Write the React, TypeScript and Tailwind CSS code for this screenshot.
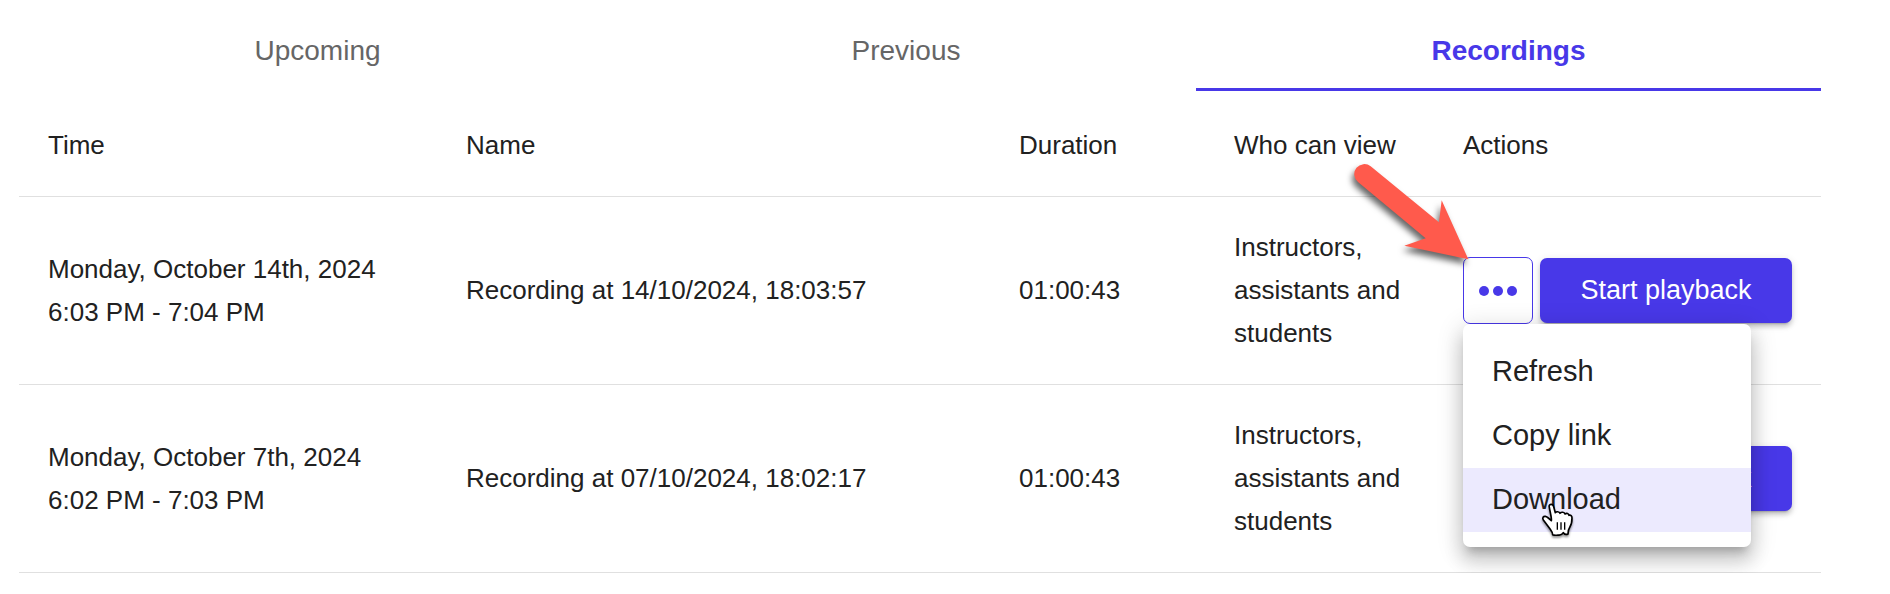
import React, { useState } from 'react';

interface Recording {
  id: number;
  date: string;
  hours: string;
  name: string;
  duration: string;
  viewers: string;
}

const TABS = ['Upcoming', 'Previous', 'Recordings'];

const MENU_ITEMS = ['Refresh', 'Copy link', 'Download'];

const RECORDINGS: Recording[] = [
  {
    id: 1,
    date: 'Monday, October 14th, 2024',
    hours: '6:03 PM - 7:04 PM',
    name: 'Recording at 14/10/2024, 18:03:57',
    duration: '01:00:43',
    viewers: 'Instructors, assistants and students',
  },
  {
    id: 2,
    date: 'Monday, October 7th, 2024',
    hours: '6:02 PM - 7:03 PM',
    name: 'Recording at 07/10/2024, 18:02:17',
    duration: '01:00:43',
    viewers: 'Instructors, assistants and students',
  },
];

const ArrowPointer = () => (
  <svg
    className="pointer-events-none absolute -left-[133px] -top-[117px] z-20 h-[140px] w-[150px] max-w-none drop-shadow-[-2px_5px_3px_rgba(0,0,0,0.6)]"
    viewBox="0 0 450 420"
    aria-hidden="true"
  >
    <path
      d="M122 79 L327 247 L335 181 L415 358 L223 317 L287 295 L84 126 A30 30 0 1 1 122 79 Z"
      fill="#ff5a4c"
    />
  </svg>
);

const HandCursor = () => (
  <svg
    className="pointer-events-none absolute left-[77px] top-[34px] z-20 h-[38px] w-[36px] max-w-none drop-shadow-[0_2px_1px_rgba(0,0,0,0.4)]"
    viewBox="60 66 108 114"
    aria-hidden="true"
  >
    <path
      d="M88 82 C86 76 90 73 94 73 C98 73 100 76 101 80 L106 98 C108 94 118 94 120 100 C124 95 133 96 135 102 C140 98 146 100 147 106 C152 104 156 108 156 114 C156 128 154 134 150 140 C146 146 144 152 144 162 C138 165 134 164 130 158 C126 165 120 166 114 165 C108 166 102 166 98 164 C98 156 92 150 88 144 C82 136 76 128 70 120 C66 114 70 108 76 109 C82 110 86 114 94 122 C96 116 90 96 88 82 Z"
      fill="#fff"
      stroke="#000"
      strokeWidth="5"
      strokeLinejoin="round"
    />
    <path d="M112 127 V149 M123 127 V149 M134 127 V149" stroke="#000" strokeWidth="4" />
  </svg>
);

const ActionsMenu = () => (
  <div
    role="menu"
    className="absolute left-0 top-full z-10 w-[288px] rounded-[7px] bg-white pt-4 pb-[15px] shadow-[0_9px_9px_-5px_rgba(0,0,0,0.2),0_14px_18px_2px_rgba(0,0,0,0.14),0_5px_25px_4px_rgba(0,0,0,0.12)]"
  >
    {MENU_ITEMS.map((item) => (
      <button
        key={item}
        type="button"
        role="menuitem"
        className={`relative block h-16 w-full px-[29px] pb-0.5 text-left text-[29px] leading-[43px] ${
          item === 'Download' ? 'bg-[#eceafe]' : 'hover:bg-[#eceafe]'
        }`}
      >
        {item}
        {item === 'Download' && <HandCursor />}
      </button>
    ))}
  </div>
);

const App: React.FC = () => {
  const [activeTab, setActiveTab] = useState('Recordings');
  const [openMenu, setOpenMenu] = useState<number | null>(1);

  return (
    <div className="bg-white pl-[19px] pr-[69px] font-['Liberation_Sans',Arial,sans-serif] text-[#212121]">
      <div role="tablist" className="flex">
        {TABS.map((tab) => (
          <button
            key={tab}
            type="button"
            role="tab"
            aria-selected={tab === activeTab}
            onClick={() => setActiveTab(tab)}
            className={`flex-auto border-b-[3px] pt-[30px] pb-4 text-[28px] leading-[42px] ${
              tab === activeTab
                ? 'border-[#4838e8] font-bold text-[#4838e8]'
                : 'border-transparent text-[#666]'
            }`}
          >
            {tab}
          </button>
        ))}
      </div>

      <table className="mt-1 w-full table-fixed border-separate border-spacing-0 text-left text-[26px] leading-[43px]">
        <thead>
          <tr className="*:border-b *:border-[#e0e0e0] *:p-[29px] *:font-normal">
            <th className="w-[418px]">Time</th>
            <th>Name</th>
            <th className="w-[215px]">Duration</th>
            <th className="w-[229px]">Who can view</th>
            <th className="w-[387px]">Actions</th>
          </tr>
        </thead>
        <tbody>
          {RECORDINGS.map((rec) => (
            <tr key={rec.id} className="*:border-b *:border-[#e0e0e0] *:p-[29px]">
              <td>
                <p>{rec.date}</p>
                <p>{rec.hours}</p>
              </td>
              <td>{rec.name}</td>
              <td>{rec.duration}</td>
              <td>{rec.viewers}</td>
              <td>
                <div className="flex items-center gap-[7px]">
                  <div className="relative">
                    <button
                      type="button"
                      aria-label="More actions"
                      aria-haspopup="menu"
                      aria-expanded={openMenu === rec.id}
                      onClick={() => setOpenMenu(openMenu === rec.id ? null : rec.id)}
                      className="flex h-[67px] w-[70px] items-center justify-center rounded-[7px] border border-[#4838e8] bg-white"
                    >
                      <svg className="h-[10px] w-[38px]" viewBox="0 0 38 10" fill="#4838e8" aria-hidden="true">
                        <circle cx="5" cy="5" r="5" />
                        <circle cx="19" cy="5" r="5" />
                        <circle cx="33" cy="5" r="5" />
                      </svg>
                    </button>
                    {openMenu === rec.id && <ActionsMenu />}
                    {rec.id === 1 && <ArrowPointer />}
                  </div>
                  <button
                    type="button"
                    className="h-[65px] flex-1 rounded-[7px] bg-[#4838e8] text-[27px] text-white shadow-[0_5px_2px_-4px_rgba(0,0,0,0.2),0_4px_4px_0_rgba(0,0,0,0.14),0_2px_9px_0_rgba(0,0,0,0.12)]"
                  >
                    Start playback
                  </button>
                </div>
              </td>
            </tr>
          ))}
        </tbody>
      </table>
    </div>
  );
};

export default App;
